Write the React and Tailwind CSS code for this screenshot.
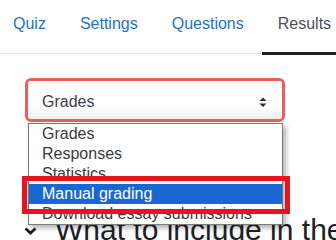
import React from "react";

const tabs = [
  { label: "Quiz", active: false },
  { label: "Settings", active: false },
  { label: "Questions", active: false },
  { label: "Results", active: true },
];

const options = ["Grades", "Responses", "Statistics", "Manual grading", "Download essay submissions"];

export default function App() {
  return (
    <div
      className="relative w-[336px] h-[240px] overflow-hidden bg-white"
      style={{ fontFamily: '"Liberation Sans", Arial, sans-serif' }}
    >
      {/* Tabs */}
      <nav className="flex border-b border-[#dee2e6] whitespace-nowrap">
        <div className="flex gap-[2px] ml-[-3px]">
          {tabs.map((t) => (
            <div
              key={t.label}
              className={
                "shrink-0 px-4 pt-[12px] pb-[16px] mb-[-2px] border-b-[3px] text-[16px] leading-[24px] " +
                (t.active
                  ? "border-[#1d2125] text-[#4a4f55]"
                  : "border-transparent text-[#1f72c4]")
              }
            >
              {t.label}
            </div>
          ))}
        </div>
      </nav>

      {/* Select */}
      <div className="mt-[24px] ml-[25px] w-[260px] h-[44px] rounded-[6px] border-[3px] border-[#ea5f5a] shadow-[inset_0_0_0_1px_#f2a29e]">
        <div className="h-full flex items-center pt-[4px] pl-[14px] pr-[15px] rounded-[3px] bg-gradient-to-b from-white from-60% to-[#f1f1f1]">
          <span className="flex-1 text-[16px] leading-[24px] text-[#3c4046]">Grades</span>
          <svg width="8" height="11" viewBox="0 0 8 11" className="shrink-0 mt-[1px]">
            <path d="M0.5 4 L4 0.5 L7.5 4 Z" fill="#2b2f33" />
            <path d="M0.5 6.5 L4 10 L7.5 6.5 Z" fill="#2b2f33" />
          </svg>
        </div>
      </div>

      {/* Heading under the dropdown */}
      <div className="mt-[90px] flex items-center whitespace-nowrap">
        <svg width="13" height="8" viewBox="0 0 13 8" className="shrink-0 ml-[24px] mr-[18px] mt-[2px]">
          <path d="M1.5 1.5 L6.5 6 L11.5 1.5" fill="none" stroke="#1d2125" strokeWidth="2.8" />
        </svg>
        <span className="shrink-0 text-[30px] leading-[36px] text-[#1d2125]">What to include in the report</span>
      </div>

      {/* Open dropdown list */}
      <div className="absolute left-[28px] top-[123px] w-[255px] bg-white border border-[#7a7a7a] shadow-[3px_3px_5px_rgba(0,0,0,0.3)]">
        {options.map((o) => (
          <div
            key={o}
            className={
              "h-[20px] pl-[13px] text-[16px] leading-[20px] whitespace-nowrap " +
              (o === "Manual grading" ? "bg-[#1a66d2] text-white" : "text-[#3a3a3a]")
            }
          >
            {o}
          </div>
        ))}
      </div>

      {/* Red annotation box */}
      <div className="absolute left-[22px] top-[176px] w-[268px] h-[38px] border-[5px] border-[#e5141f]" />
    </div>
  );
}
